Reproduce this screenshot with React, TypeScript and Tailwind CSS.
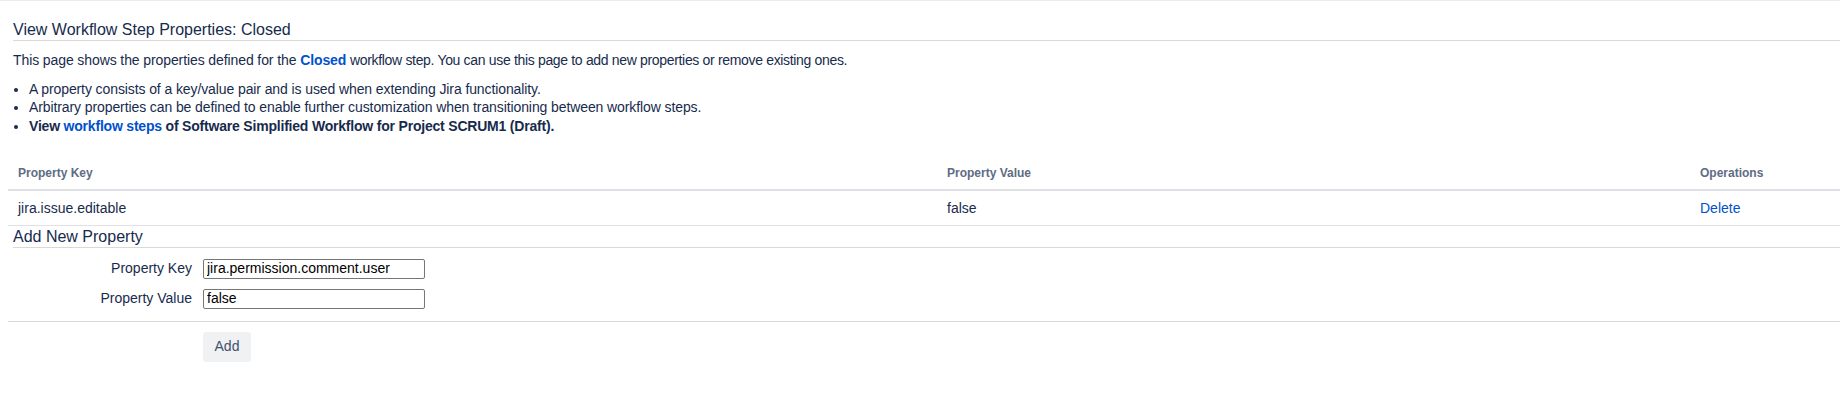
import { useState } from "react";

const properties: { key: string; value: string }[] = [
  { key: "jira.issue.editable", value: "false" },
];

const font = "font-['Liberation_Sans',Arial,sans-serif]";

function FormRow({
  label,
  value,
  onChange,
}: {
  label: string;
  value: string;
  onChange: (v: string) => void;
}) {
  return (
    <div className="flex items-center h-[30px]">
      <label className="w-[195px] text-right pr-[11px] text-[14px] text-[#172b4d]">
        {label}
      </label>
      <input
        className="w-[222px] h-[20px] border border-[#767676] rounded-[2px] px-[3px] text-[14px] text-black outline-none"
        value={value}
        onChange={(e) => onChange(e.target.value)}
      />
    </div>
  );
}

export default function App() {
  const [newKey, setNewKey] = useState("jira.permission.comment.user");
  const [newValue, setNewValue] = useState("false");

  return (
    <div className={`w-full min-h-[409px] bg-white border-t border-[#ebecf0] ${font}`}>
      <div className="pl-[8px]">
        <h2 className="ml-[5px] mt-[19px] text-[16px] leading-[20px] font-medium text-[#172b4d] border-b border-[#d9d9d9]">
          View Workflow Step Properties: Closed
        </h2>
        <p className="ml-[5px] mt-[9px] text-[14px] leading-[20px] tracking-[-0.1px] text-[#172b4d]">
          This page shows the properties defined for the{" "}
          <a href="#" className="font-bold text-[#0052cc]">
            Closed
          </a>{" "}
          <span className="tracking-[-0.33px]">
            workflow step. You can use this page to add new properties or remove existing ones.
          </span>
        </p>
        <ul className="ml-[5px] mt-[10px] pl-[16px] list-disc text-[14px] leading-[18.33px] tracking-[-0.1px] text-[#172b4d]">
          <li>A property consists of a key/value pair and is used when extending Jira functionality.</li>
          <li>
            Arbitrary properties can be defined to enable further customization when transitioning
            between workflow steps.
          </li>
          <li className="font-bold tracking-[-0.2px]">
            View{" "}
            <a href="#" className="text-[#0052cc]">
              workflow steps
            </a>{" "}
            of Software Simplified Workflow for Project SCRUM1 (Draft).
          </li>
        </ul>

        <table className="w-full mt-[22px] border-collapse table-fixed">
          <colgroup>
            <col className="w-[929px]" />
            <col className="w-[753px]" />
            <col />
          </colgroup>
          <thead>
            <tr className="border-b-2 border-[#dfe1e6]">
              <th className="text-left font-semibold text-[12px] leading-[20px] text-[#5e6c84] pl-[10px] py-[6px]">
                Property Key
              </th>
              <th className="text-left font-semibold text-[12px] leading-[20px] text-[#5e6c84] pl-[10px] py-[6px]">
                Property Value
              </th>
              <th className="text-left font-semibold text-[12px] leading-[20px] text-[#5e6c84] pl-[10px] py-[6px]">
                Operations
              </th>
            </tr>
          </thead>
          <tbody>
            {properties.map((p) => (
              <tr key={p.key} className="border-b border-[#dfe1e6]">
                <td className="text-[14px] leading-[20px] text-[#172b4d] pl-[10px] py-[7px]">{p.key}</td>
                <td className="text-[14px] leading-[20px] text-[#172b4d] pl-[10px] py-[7px]">{p.value}</td>
                <td className="text-[14px] leading-[20px] pl-[10px] py-[7px]">
                  <a href="#" className="text-[#0052cc]">
                    Delete
                  </a>
                </td>
              </tr>
            ))}
          </tbody>
        </table>

        <h2 className="ml-[5px] mt-[1px] text-[16px] leading-[20px] font-medium text-[#172b4d] border-b border-[#d9d9d9]">
          Add New Property
        </h2>
        <div className="mt-[6px] flex flex-col">
          <FormRow label="Property Key" value={newKey} onChange={setNewKey} />
          <FormRow label="Property Value" value={newValue} onChange={setNewValue} />
        </div>
        <div className="mt-[7px] border-t border-[#d9d9d9] pt-[10px] pl-[195px]">
          <button className="w-[48px] h-[30px] rounded-[3px] bg-[#f0f1f3] text-[14px] text-[#42526e]">
            Add
          </button>
        </div>
      </div>
    </div>
  );
}
